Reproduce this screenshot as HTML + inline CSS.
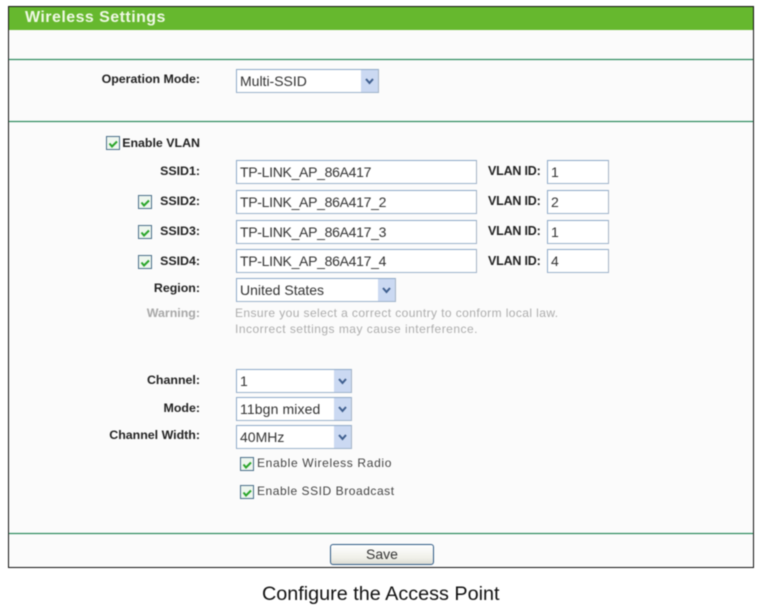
<!DOCTYPE html>
<html><head><meta charset="utf-8">
<style>
html,body{margin:0;padding:0;background:#fff}
body{width:759px;height:611px;position:relative;overflow:hidden;font-family:"Liberation Sans",sans-serif}
#w{position:absolute;left:0;top:0;width:759px;height:611px;filter:blur(.45px)}
#w div{position:absolute;box-sizing:border-box;white-space:nowrap}
.frame{left:8px;top:6px;width:746px;height:562px;border:1px solid #111;border-width:1px 1.5px 1.5px 1px;background:#fbfbfb}
.head{left:9px;top:7px;width:744px;height:23px;background:#66b82e}
.title{left:25px;top:8px;color:#eef8e4;font:bold 16px/20px "Liberation Sans",sans-serif;letter-spacing:.45px}
.hr{left:9px;width:744px;height:1px;background:#1f8050;box-shadow:0 0 1px #9fd6bd}
.l{width:200px;left:0;text-align:right;font:bold 12.4px/16px "Liberation Sans",sans-serif;color:#222}
.v{font:bold 12.5px/16px "Liberation Sans",sans-serif;color:#222;left:488px;letter-spacing:-.2px}
.box{background:#fff;border:1px solid #8faac8;border-bottom-color:#9db2cb;border-right-color:#a5b4c6;font:14px/22px "Liberation Sans",sans-serif;color:#333;padding-left:3px;height:24px}
.n{letter-spacing:-.3px}
.btn{width:17px;height:22px;top:0;right:0;background:#cbd9f2}
.cb{width:14px;height:14px;border:1px solid #4a6f8a;background:#eef6ee}
.t{font:12px/16px "Liberation Sans",sans-serif;color:#444;letter-spacing:.55px}
.g{font:12px/16px "Liberation Sans",sans-serif;color:#adadad;left:235px}
svg{position:absolute;left:0;top:0;overflow:visible}
</style></head><body><div id="w">
<div class="frame"></div>
<div class="head"></div>
<div class="title">Wireless Settings</div>
<div class="hr" style="top:59px"></div>
<div class="hr" style="top:121px"></div>
<div class="hr" style="top:533px"></div>

<div class="l" style="top:71px">Operation Mode:</div>
<div class="box" style="left:236px;top:69px;width:143px">Multi-SSID<div class="btn"><svg width="17" height="22"><path d="M5 9l3.5 4 3.5-4" fill="none" stroke="#3f5f8f" stroke-width="2"/></svg></div></div>

<div class="cb" style="left:106px;top:136px"><svg width="14" height="14"><path d="M2.5 6.5l2.5 3 5-5" fill="none" stroke="#2aa52a" stroke-width="2"/></svg></div>
<div class="l" style="top:135px">Enable VLAN</div>

<div class="l" style="top:163px">SSID1:</div>
<div class="box n" style="left:236px;top:160px;width:241px">TP-LINK_AP_86A417</div>
<div class="v" style="top:163px">VLAN ID:</div>
<div class="box" style="left:547px;top:160px;width:62px">1</div>

<div class="cb" style="left:138px;top:195px"><svg width="14" height="14"><path d="M2.5 6.5l2.5 3 5-5" fill="none" stroke="#2aa52a" stroke-width="2"/></svg></div>
<div class="l" style="top:193px">SSID2:</div>
<div class="box n" style="left:236px;top:190px;width:241px">TP-LINK_AP_86A417_2</div>
<div class="v" style="top:193px">VLAN ID:</div>
<div class="box" style="left:547px;top:190px;width:62px">2</div>

<div class="cb" style="left:138px;top:225px"><svg width="14" height="14"><path d="M2.5 6.5l2.5 3 5-5" fill="none" stroke="#2aa52a" stroke-width="2"/></svg></div>
<div class="l" style="top:223px">SSID3:</div>
<div class="box n" style="left:236px;top:220px;width:241px">TP-LINK_AP_86A417_3</div>
<div class="v" style="top:223px">VLAN ID:</div>
<div class="box" style="left:547px;top:220px;width:62px">1</div>

<div class="cb" style="left:138px;top:255px"><svg width="14" height="14"><path d="M2.5 6.5l2.5 3 5-5" fill="none" stroke="#2aa52a" stroke-width="2"/></svg></div>
<div class="l" style="top:253px">SSID4:</div>
<div class="box n" style="left:236px;top:249px;width:241px">TP-LINK_AP_86A417_4</div>
<div class="v" style="top:253px">VLAN ID:</div>
<div class="box" style="left:547px;top:249px;width:62px">4</div>

<div class="l" style="top:280px">Region:</div>
<div class="box" style="left:236px;top:278px;width:160px">United States<div class="btn"><svg width="17" height="22"><path d="M5 9l3.5 4 3.5-4" fill="none" stroke="#3f5f8f" stroke-width="2"/></svg></div></div>

<div class="l" style="top:305px;color:#a8a8a8">Warning:</div>
<div class="g" style="top:305px;letter-spacing:.41px">Ensure you select a correct country to conform local law.</div>
<div class="g" style="top:321px;letter-spacing:.48px">Incorrect settings may cause interference.</div>

<div class="l" style="top:372px">Channel:</div>
<div class="box" style="left:236px;top:369px;width:116px">1<div class="btn"><svg width="17" height="22"><path d="M5 9l3.5 4 3.5-4" fill="none" stroke="#3f5f8f" stroke-width="2"/></svg></div></div>
<div class="l" style="top:400px">Mode:</div>
<div class="box" style="left:236px;top:397px;width:116px;letter-spacing:.12px">11bgn mixed<div class="btn"><svg width="17" height="22"><path d="M5 9l3.5 4 3.5-4" fill="none" stroke="#3f5f8f" stroke-width="2"/></svg></div></div>
<div class="l" style="top:427px">Channel Width:</div>
<div class="box" style="left:236px;top:425px;width:116px">40MHz<div class="btn"><svg width="17" height="22"><path d="M5 9l3.5 4 3.5-4" fill="none" stroke="#3f5f8f" stroke-width="2"/></svg></div></div>

<div class="cb" style="left:240px;top:457px"><svg width="14" height="14"><path d="M2.5 6.5l2.5 3 5-5" fill="none" stroke="#2aa52a" stroke-width="2"/></svg></div>
<div class="t" style="left:257px;top:455px;letter-spacing:.65px">Enable Wireless Radio</div>
<div class="cb" style="left:240px;top:485px"><svg width="14" height="14"><path d="M2.5 6.5l2.5 3 5-5" fill="none" stroke="#2aa52a" stroke-width="2"/></svg></div>
<div class="t" style="left:257px;top:483px">Enable SSID Broadcast</div>

<div style="left:330px;top:544px;width:104px;height:21px;border:1px solid #2f5a85;border-radius:3px;background:linear-gradient(#fff,#efefe8 70%,#dcdcd4);text-align:center;font:14px/19px 'Liberation Sans',sans-serif;color:#333">Save</div>

<div style="left:262px;top:583px;font:19.8px/22px 'Liberation Sans',sans-serif;color:#111">Configure the Access Point</div>
</div></body></html>
